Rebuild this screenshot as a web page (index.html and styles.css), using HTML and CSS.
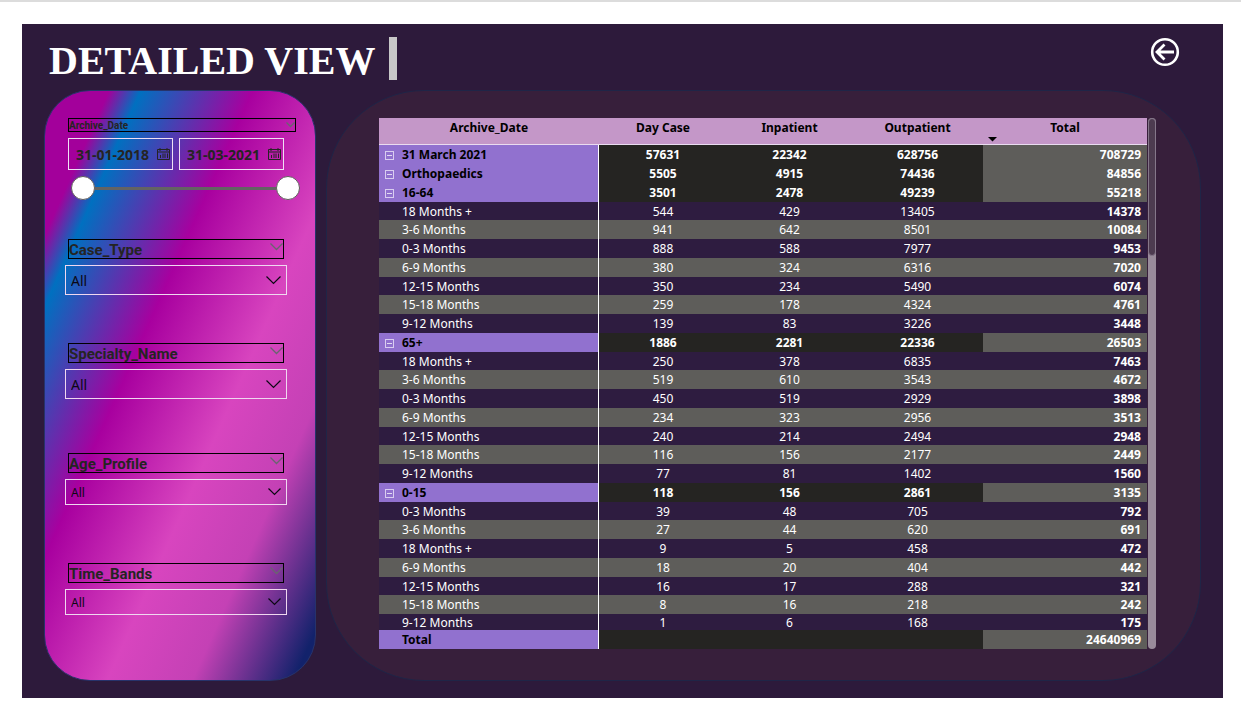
FILE: index.html
```html
<!DOCTYPE html>
<html lang="en">
<head>
<meta charset="utf-8">
<title>Detailed View</title>
<link rel="stylesheet" href="styles.css">
</head>
<body>
<main class="board">
  <header class="board-header">
    <h1 class="title">DETAILED VIEW</h1>
    <span class="title-bar"></span>
    <button class="back" type="button" aria-label="Back">
      <svg width="30" height="30" viewBox="0 0 30 30" fill="none" stroke="#fff" stroke-width="3"><circle cx="15" cy="15" r="12.8" stroke-width="2.6"/><path d="M24 15H8M14.500 7.500L7 15l7.500 7.500" stroke-width="2.800"/></svg>
    </button>
  </header>
  <div class="panels">
    <form class="filters">
      <section class="filter filter-date">
        <h2 class="filter-title filter-title-small">Archive_Date
          <svg class="caret" width="9" height="6" viewBox="0 0 9 6"><path d="M.5 .5l4 4 4-4"/></svg>
        </h2>
        <div class="dates">
          <label class="date"><input class="date-input" type="text" value="31-01-2018" aria-label="From date">
            <svg class="cal" width="13" height="12" viewBox="0 0 13 12"><path d="M.5 1.500h12v10H.5zM.5 4h12M3 0v3M10 0v3M3.500 10V7M6 10V5.500M8 10V5.500M10.500 10V5.500"/></svg>
          </label>
          <label class="date"><input class="date-input" type="text" value="31-03-2021" aria-label="To date">
            <svg class="cal" width="13" height="12" viewBox="0 0 13 12"><path d="M.5 1.500h12v10H.5zM.5 4h12M3 0v3M10 0v3M3.500 10V7M6 10V5.500M8 10V5.500M10.500 10V5.500"/></svg>
          </label>
        </div>
        <div class="slider">
          <input class="range range-start" type="range" min="0" max="100" value="0" aria-label="Range start">
          <input class="range range-end" type="range" min="0" max="100" value="100" aria-label="Range end">
        </div>
      </section>
      <section class="filter filter-case">
        <label class="filter-title" for="case">Case_Type
          <svg class="caret" width="13" height="8" viewBox="0 0 13 8"><path d="M.5 .5l6 6 6-6"/></svg>
        </label>
        <div class="drop">
          <select class="select" id="case"><option>All</option></select>
          <svg class="arrow" width="15" height="9" viewBox="0 0 15 9"><path d="M.5 .5l7 7 7-7"/></svg>
        </div>
      </section>
      <section class="filter filter-specialty">
        <label class="filter-title" for="specialty">Specialty_Name
          <svg class="caret" width="13" height="8" viewBox="0 0 13 8"><path d="M.5 .5l6 6 6-6"/></svg>
        </label>
        <div class="drop">
          <select class="select" id="specialty"><option>All</option></select>
          <svg class="arrow" width="15" height="9" viewBox="0 0 15 9"><path d="M.5 .5l7 7 7-7"/></svg>
        </div>
      </section>
      <section class="filter filter-compact">
        <label class="filter-title" for="age">Age_Profile
          <svg class="caret" width="13" height="8" viewBox="0 0 13 8"><path d="M.5 .5l6 6 6-6"/></svg>
        </label>
        <div class="drop">
          <select class="select" id="age"><option>All</option></select>
          <svg class="arrow" width="13" height="8" viewBox="0 0 13 8"><path d="M.5 .5l6 6 6-6"/></svg>
        </div>
      </section>
      <section class="filter filter-compact">
        <label class="filter-title" for="bands">Time_Bands
          <svg class="caret" width="13" height="8" viewBox="0 0 13 8"><path d="M.5 .5l6 6 6-6"/></svg>
        </label>
        <div class="drop">
          <select class="select" id="bands"><option>All</option></select>
          <svg class="arrow" width="13" height="8" viewBox="0 0 13 8"><path d="M.5 .5l6 6 6-6"/></svg>
        </div>
      </section>
    </form>
    <section class="report">
      <table class="matrix">
        <colgroup><col class="col-name"><col class="col-day"><col class="col-in"><col class="col-out"><col></colgroup>
        <thead>
          <tr><th>Archive_Date</th><th>Day Case</th><th>Inpatient</th><th>Outpatient</th><th class="sorted">Total<svg class="sort" width="9" height="5" viewBox="0 0 9 5"><path d="M0 0h9L4.500 4.500z"/></svg></th></tr>
        </thead>
        <tbody>
          <tr class="group"><th><button class="toggle" type="button" aria-label="Collapse"></button>31 March 2021</th><td>57631</td><td>22342</td><td>628756</td><td>708729</td></tr>
          <tr class="group"><th><button class="toggle" type="button" aria-label="Collapse"></button>Orthopaedics</th><td>5505</td><td>4915</td><td>74436</td><td>84856</td></tr>
          <tr class="group"><th><button class="toggle" type="button" aria-label="Collapse"></button>16-64</th><td>3501</td><td>2478</td><td>49239</td><td>55218</td></tr>
          <tr><th>18 Months +</th><td>544</td><td>429</td><td>13405</td><td>14378</td></tr>
          <tr class="alt"><th>3-6 Months</th><td>941</td><td>642</td><td>8501</td><td>10084</td></tr>
          <tr><th>0-3 Months</th><td>888</td><td>588</td><td>7977</td><td>9453</td></tr>
          <tr class="alt"><th>6-9 Months</th><td>380</td><td>324</td><td>6316</td><td>7020</td></tr>
          <tr><th>12-15 Months</th><td>350</td><td>234</td><td>5490</td><td>6074</td></tr>
          <tr class="alt"><th>15-18 Months</th><td>259</td><td>178</td><td>4324</td><td>4761</td></tr>
          <tr><th>9-12 Months</th><td>139</td><td>83</td><td>3226</td><td>3448</td></tr>
          <tr class="group"><th><button class="toggle" type="button" aria-label="Collapse"></button>65+</th><td>1886</td><td>2281</td><td>22336</td><td>26503</td></tr>
          <tr><th>18 Months +</th><td>250</td><td>378</td><td>6835</td><td>7463</td></tr>
          <tr class="alt"><th>3-6 Months</th><td>519</td><td>610</td><td>3543</td><td>4672</td></tr>
          <tr><th>0-3 Months</th><td>450</td><td>519</td><td>2929</td><td>3898</td></tr>
          <tr class="alt"><th>6-9 Months</th><td>234</td><td>323</td><td>2956</td><td>3513</td></tr>
          <tr><th>12-15 Months</th><td>240</td><td>214</td><td>2494</td><td>2948</td></tr>
          <tr class="alt"><th>15-18 Months</th><td>116</td><td>156</td><td>2177</td><td>2449</td></tr>
          <tr><th>9-12 Months</th><td>77</td><td>81</td><td>1402</td><td>1560</td></tr>
          <tr class="group"><th><button class="toggle" type="button" aria-label="Collapse"></button>0-15</th><td>118</td><td>156</td><td>2861</td><td>3135</td></tr>
          <tr><th>0-3 Months</th><td>39</td><td>48</td><td>705</td><td>792</td></tr>
          <tr class="alt"><th>3-6 Months</th><td>27</td><td>44</td><td>620</td><td>691</td></tr>
          <tr><th>18 Months +</th><td>9</td><td>5</td><td>458</td><td>472</td></tr>
          <tr class="alt"><th>6-9 Months</th><td>18</td><td>20</td><td>404</td><td>442</td></tr>
          <tr><th>12-15 Months</th><td>16</td><td>17</td><td>288</td><td>321</td></tr>
          <tr class="alt"><th>15-18 Months</th><td>8</td><td>16</td><td>218</td><td>242</td></tr>
          <tr class="last"><th>9-12 Months</th><td>1</td><td>6</td><td>168</td><td>175</td></tr>
        </tbody>
        <tfoot>
          <tr class="group"><th>Total</th><td></td><td></td><td></td><td>24640969</td></tr>
        </tfoot>
      </table>
      <div class="scrollbar"><div class="thumb"></div></div>
    </section>
  </div>
</main>
</body>
</html>
```

FILE: styles.css
```css
* { box-sizing: border-box; }

body {
  margin: 0;
  padding: 22px 18px 24px 22px;
  background: #fff;
  border-top: 2px solid #dcdcdc;
  font-family: "Noto Sans", "Open Sans", sans-serif;
  font-size: 12px;
}

.board {
  display: flex;
  flex-direction: column;
  min-height: calc(100vh - 48px);
  padding: 0 22px 17px;
  background: #2d1a3b;
}

.board-header {
  display: flex;
  align-items: center;
  height: 66px;
  padding: 0 21px 0 5px;
}

.title {
  margin: 8px 0 0;
  color: #fff;
  font: bold 40px/46px "Liberation Serif", serif;
}

.title-bar {
  width: 8px;
  height: 43px;
  margin: 3px 0 0 14px;
  background: #c8c8c8;
}

.back {
  width: 30px;
  height: 30px;
  margin: 0 0 10px auto;
  padding: 0;
  border: 0;
  background: none;
}

.back svg { display: block; }

.panels {
  display: grid;
  grid-template-columns: 272px 1fr;
  gap: 10px;
  flex: 1;
}

.filters {
  padding: 27px 20px 0 22px;
  border: 1px solid #27336b;
  border-radius: 46px;
  background: linear-gradient(114deg, #a3009b 12%, #0070c0 18%, #a8009f 39%, #d845bf 61%, #c441b5 77%, #12226b 96%);
}

.filter { display: flex; flex-direction: column; gap: 6px; }
.filter-date { height: 121px; }
.filter-case { height: 104px; }
.filter-specialty { height: 110px; }
.filter-compact { height: 110px; }

.filter-title {
  display: flex;
  justify-content: space-between;
  width: 216px;
  height: 20px;
  margin: 0 0 0 1px;
  padding: 0;
  border: 1px solid #000;
  color: #252423;
  font: bold 15px/20px Roboto, sans-serif;
}

.filter-title-small {
  width: 228px;
  height: 14px;
  font-size: 10px;
  line-height: 13px;
}

.caret, .arrow, .cal { fill: none; stroke: #6a6470; }
.caret { margin-top: 3px; stroke-width: 1.3; }

.dates { display: flex; gap: 6px; margin-left: 1px; }

.date {
  display: flex;
  align-items: center;
  width: 105px;
  height: 32px;
  padding: 0 2px 0 7px;
  border: 1px solid #f0e0f5;
}

.date-input {
  flex: 1;
  min-width: 0;
  padding: 2px 0 0;
  border: 0;
  background: none;
  color: #252423;
  font: bold 14px/20px "Noto Sans", sans-serif;
}

.cal { flex: none; stroke: #252423; }

.slider { display: grid; width: 229px; margin-left: 4px; }

.range {
  grid-area: 1 / 1;
  width: 100%;
  height: 24px;
  margin: 0;
  appearance: none;
  background: none;
  pointer-events: none;
}

.range-start { background: linear-gradient(#636363, #636363) center / 205px 3px no-repeat; }

.range::-webkit-slider-thumb {
  appearance: none;
  width: 24px;
  height: 24px;
  border: 1px solid #605e5c;
  border-radius: 50%;
  background: #fff;
  pointer-events: auto;
}

.drop { display: grid; width: 222px; margin-left: -2px; }

.select {
  grid-area: 1 / 1;
  width: 100%;
  height: 30px;
  padding: 2px 5px 0;
  appearance: none;
  border: 1px solid #f0d8f0;
  border-radius: 0;
  background: none;
  color: #0c0814;
  font: 14px/20px "Noto Sans", sans-serif;
}

.arrow {
  grid-area: 1 / 1;
  align-self: center;
  justify-self: end;
  margin-right: 6px;
  stroke: #0c0814;
  stroke-width: 1.2;
  pointer-events: none;
}

.filter-compact .select { height: 26px; font-size: 12px; }

.report {
  display: flex;
  align-items: flex-start;
  padding: 27px 44px 31px 52px;
  border: 1px solid #1f2547;
  border-radius: 98px;
  background: #371f3b;
}

.matrix {
  flex: 1;
  table-layout: fixed;
  border-collapse: separate;
  border-spacing: 0;
  color: #fff;
}

.col-name { width: 220px; }
.col-day { width: 128px; }
.col-in { width: 125px; }
.col-out { width: 131px; }

.matrix th, .matrix td { padding: 1px 0 0; text-align: center; white-space: nowrap; }

.matrix thead th {
  position: relative;
  height: 27px;
  padding: 0 0 7px;
  background: #c497c8;
  box-shadow: inset 0 -1px #eadcf0;
  color: #000;
  line-height: 20px;
}

.sort { position: absolute; left: 5px; bottom: 3px; }

.matrix tbody tr, .matrix tfoot tr { height: 19px; background: #2e1c40; line-height: 18px; }
.matrix tbody tr:nth-child(4n) { height: 18px; line-height: 17px; }
.matrix tbody tr.alt { background: #5e5d5a; }
.matrix tbody tr.last { height: 16px; line-height: 14px; }
.matrix tbody tr.last > * { padding-top: 2px; }

.matrix tbody th, .matrix tfoot th {
  position: relative;
  padding-left: 23px;
  border-right: 1px solid #fff;
  font-weight: normal;
  text-align: left;
}

.matrix td:last-child { padding-right: 6px; font-weight: bold; text-align: right; }

.matrix .group th { background: #9171cf; color: #000; font-weight: bold; }
.matrix .group td { background: #252422; font-weight: bold; }
.matrix .group td:last-child { background: #5e5d5a; }

.toggle {
  position: absolute;
  top: 6px;
  left: 6px;
  width: 9px;
  height: 9px;
  padding: 0;
  border: 1px solid #d9cdf0;
  background: linear-gradient(#e4dbf5, #e4dbf5) center / 5px 1px no-repeat;
}

.scrollbar {
  align-self: stretch;
  width: 8px;
  margin-left: 1px;
  border-radius: 4px;
  background: #998b9b;
}

.thumb {
  height: 26%;
  border: 1px solid #85778a;
  border-radius: 4px;
  background: #4d3b50;
}
```
